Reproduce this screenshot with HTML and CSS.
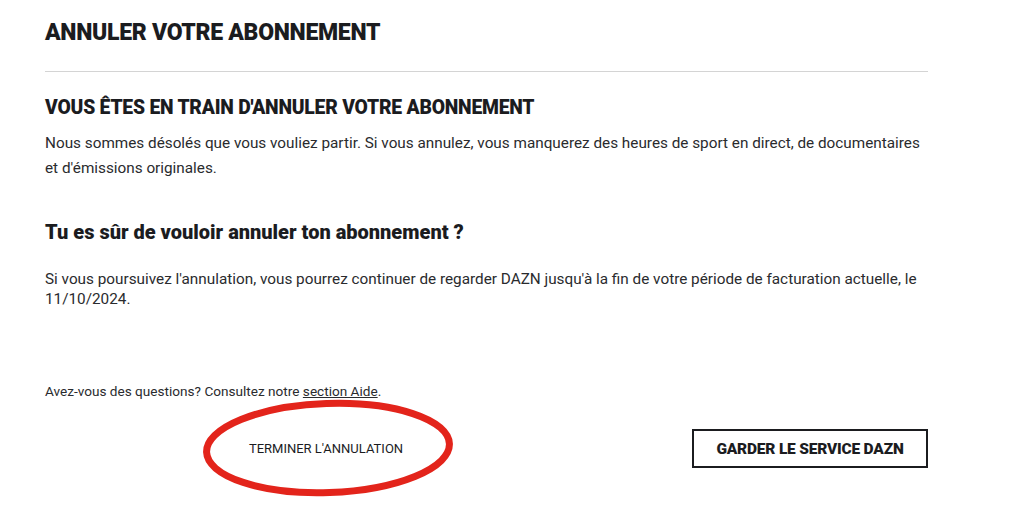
FILE: index.html
```html
<!DOCTYPE html>
<html lang="fr">
<head>
<meta charset="utf-8">
<title>Annuler votre abonnement</title>
<link rel="stylesheet" href="styles.css">
</head>
<body>
<main class="page">
  <h1 class="title">ANNULER VOTRE ABONNEMENT</h1>
  <hr class="divider">
  <h2 class="subtitle">VOUS ÊTES EN TRAIN D'ANNULER VOTRE ABONNEMENT</h2>
  <p class="lead">Nous sommes désolés que vous vouliez partir. Si vous annulez, vous manquerez des heures de sport en direct, de documentaires et d'émissions originales.</p>
  <h3 class="question">Tu es sûr de vouloir annuler ton abonnement ?</h3>
  <p class="info">Si vous poursuivez l'annulation, vous pourrez continuer de regarder DAZN jusqu'à la fin de votre période de facturation actuelle, le 11/10/2024.</p>
  <p class="help">Avez-vous des questions? Consultez notre <a href="#" class="help-link">section Aide</a>.</p>
  <div class="actions">
    <div class="cancel-wrap">
      <button class="btn-cancel">TERMINER L'ANNULATION</button>
      <svg class="ring" viewBox="0 0 256 102" width="256" height="102" aria-hidden="true">
        <ellipse cx="127" cy="51" rx="121.5" ry="44.5" fill="none" stroke="#e3241b" stroke-width="7" transform="rotate(-2 127 51)"/>
      </svg>
    </div>
    <button class="btn-keep">GARDER LE SERVICE DAZN</button>
  </div>
</main>
</body>
</html>
```
FILE: styles.css
```css
* { box-sizing: border-box; }
html, body { margin: 0; padding: 0; background: #fff; }
body {
  font-family: Roboto, "Noto Sans", "Liberation Sans", sans-serif;
  color: #1b1c1f;
  min-height: 100vh;
}
.page {
  width: 883px;
  margin-left: 45px;
  padding-top: 20px;
  padding-bottom: 40px;
}
.title {
  margin: 0;
  font-size: 23px;
  line-height: 26px;
  font-weight: 900;
  letter-spacing: -0.3px;
}
.divider {
  margin: 25px 0 0;
  border: 0;
  border-top: 1px solid #d4d4d4;
  height: 0;
}
.subtitle {
  margin: 25px 0 0;
  font-size: 19.3px;
  line-height: 22px;
  font-weight: 900;
  letter-spacing: -0.2px;
}
.lead {
  margin: 12px 0 0;
  font-size: 15.3px;
  line-height: 25px;
  color: #2a2b2e;
}
.question {
  margin: 39px 0 0;
  font-size: 20px;
  line-height: 24px;
  font-weight: 900;
  letter-spacing: 0;
}
.info {
  margin: 25px 0 0;
  font-size: 15.3px;
  line-height: 20px;
  color: #2a2b2e;
}
.help {
  margin: 74px 0 0;
  font-size: 13.6px;
  line-height: 16px;
  color: #2a2b2e;
}
.help-link { color: #2a2b2e; text-decoration: underline; }
.actions {
  display: flex;
  justify-content: space-between;
  align-items: center;
  margin-top: 30px;
  padding-left: 163px;
}
.cancel-wrap {
  position: relative;
  width: 236px;
  height: 39px;
}
.btn-cancel {
  width: 100%;
  height: 100%;
  border: 0;
  background: transparent;
  font-family: inherit;
  font-size: 13px;
  color: #1b1c1f;
  padding: 0;
}
.ring {
  position: absolute;
  left: -7px;
  top: -32px;
  pointer-events: none;
}
.btn-keep {
  width: 236px;
  height: 39px;
  border: 2px solid #1b1c1f;
  background: #fff;
  font-family: inherit;
  font-size: 15.5px;
  font-weight: 900;
  color: #1b1c1f;
  letter-spacing: -0.2px;
  padding: 0;
}
```
